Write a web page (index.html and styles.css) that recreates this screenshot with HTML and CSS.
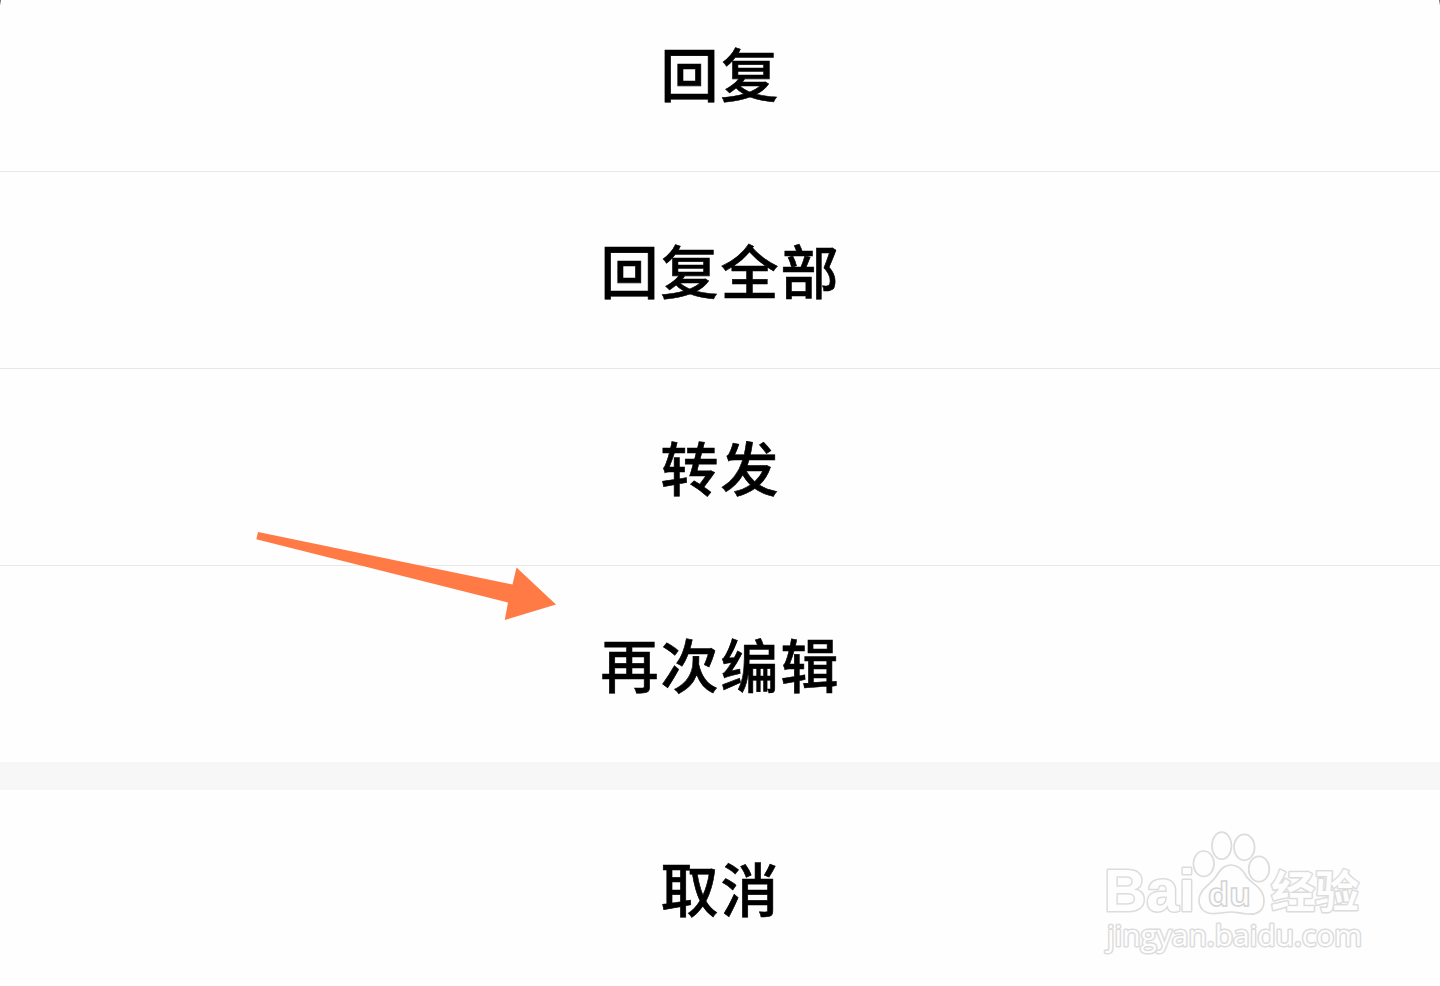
FILE: index.html
```html
<!DOCTYPE html>
<html lang="zh-CN">
<head>
<meta charset="utf-8">
<title>邮件操作</title>
<link rel="stylesheet" href="styles.css">
</head>
<body>
<main class="sheet">
  <div class="item first">回复</div>
  <div class="item">回复全部</div>
  <div class="item">转发</div>
  <div class="item last">再次编辑</div>
  <div class="gap"></div>
  <div class="item cancel">取消</div>
</main>
<svg class="arrow" viewBox="0 0 330 110" aria-hidden="true">
  <path d="M18 12 L272.5 64.5 L276.5 47.5 L316 84.5 L264.8 100 L268 82.5 L16.3 19.3 Z"/>
</svg>
<svg class="watermark" viewBox="0 0 290 146" aria-hidden="true">
  <g class="outline">
    <text class="latin" x="14" y="91" textLength="91" lengthAdjust="spacingAndGlyphs">Bai</text>
    <text class="cjk" x="181" y="88" textLength="88" lengthAdjust="spacingAndGlyphs">经验</text>
    <text class="url" x="17" y="126" textLength="255" lengthAdjust="spacingAndGlyphs">jingyan.baidu.com</text>
  </g>
  <g class="paw">
    <ellipse cx="113.700" cy="43.700" rx="10.300" ry="12.700"/>
    <ellipse cx="131.700" cy="25.700" rx="9.800" ry="13.500"/>
    <ellipse cx="154.300" cy="27.300" rx="10.300" ry="13"/>
    <ellipse cx="169" cy="49" rx="10.300" ry="12.700"/>
    <path d="M141 45 C149 45 153 50 156 56 C161 64 174 67 174 81 C174 90 168 95 158 94 C149 93 146 92 141 92 C134 92 130 94 122 93.500 C113 93 109 87 109 80 C109 69 122 64 127 55 C131 49 134 45 141 45 Z"/>
  </g>
  <text class="du" x="118" y="86" textLength="43" lengthAdjust="spacingAndGlyphs">du</text>
</svg>
<i class="corner left"></i>
<i class="corner right"></i>
</body>
</html>
```
FILE: styles.css
```css
body {
  margin: 0;
  background: #fefefe;
  overflow: hidden;
  position: relative;
  height: 986px;
}
.sheet {
  display: flex;
  flex-direction: column;
  height: 986px;
}
.item {
  box-sizing: border-box;
  height: 197px;
  flex: none;
  border-bottom: 1px solid #e8e8e8;
  padding: 55px 0 0 1px;
  text-align: center;
  font: 500 58px/84px "Noto Sans CJK SC", sans-serif;
  letter-spacing: 2px;
  color: #000;
  -webkit-text-stroke: 0.6px #000;
}
.first {
  height: 172px;
  padding-top: 30px;
}
.last {
  height: 196px;
  border-bottom: 0;
}
.gap {
  height: 28px;
  flex: none;
  background: #f7f7f7;
}
.cancel {
  height: 196px;
  border-bottom: 0;
}
.arrow {
  position: absolute;
  left: 240px;
  top: 520px;
  width: 330px;
  height: 110px;
  fill: #ff7a45;
}
.watermark {
  position: absolute;
  left: 1090px;
  top: 820px;
  width: 290px;
  height: 146px;
}
.outline text {
  fill: #fefefe;
  stroke: #dcdcdc;
  stroke-width: 3px;
  stroke-linejoin: round;
  paint-order: stroke;
}
.outline .latin {
  font: 700 59px "Liberation Sans", sans-serif;
}
.cjk {
  font: 700 44px "Noto Sans CJK SC", sans-serif;
}
.outline .url {
  font: 400 29px "Open Sans", sans-serif;
  stroke-width: 3px;
}
.paw {
  fill: #fefefe;
  stroke: #dcdcdc;
  stroke-width: 1.7px;
}
.du {
  font: 700 33px "Open Sans", sans-serif;
  fill: #fefefe;
  stroke: #d4d4d4;
  stroke-width: 1.5px;
}
.corner {
  position: absolute;
  top: 0;
  width: 1px;
  height: 5px;
  background: linear-gradient(#666, #eee);
}
.left {
  left: 0;
}
.right {
  right: 0;
}
```
